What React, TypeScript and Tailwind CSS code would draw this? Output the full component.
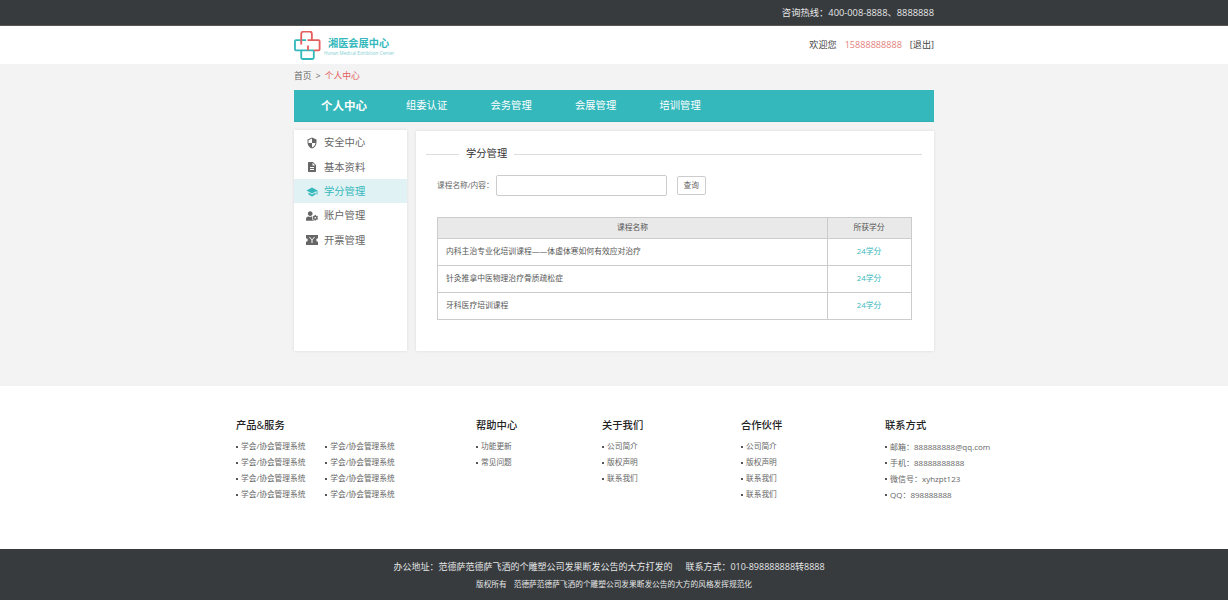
import { FaUserCog } from "react-icons/fa"
import { MdDescription, MdSchool, MdSecurity } from "react-icons/md"

const TicketIcon = ({ className }: { className?: string }) => (
    <svg className={className} viewBox="0 0 12 10" fill="currentColor">
        <path fillRule="evenodd" d="M0 0h12v3.200a1.800 1.800 0 0 0 0 3.600V10H0V6.800a1.800 1.800 0 0 0 0-3.600V0zM4 2l2 2.500L8 2h1L6.500 5v3h-1V5L3 2h1z" />
    </svg>
)

const navItems = ["组委认证", "会务管理", "会展管理", "培训管理"]

const sideItems = [
    { label: "安全中心", icon: MdSecurity },
    { label: "基本资料", icon: MdDescription },
    { label: "学分管理", icon: MdSchool, active: true },
    { label: "账户管理", icon: FaUserCog },
    { label: "开票管理", icon: TicketIcon },
]

const courses = [
    "内科主治专业化培训课程——体虚体寒如何有效应对治疗",
    "针灸推拿中医物理治疗骨质疏松症",
    "牙科医疗培训课程",
]

const FooterList = ({ items, wide }: { items: string[]; wide?: boolean }) => (
    <ul className={wide ? "mt-[7px] text-[8px] text-[#666]" : "mt-[7px] text-[7.700px] text-[#666]"}>
        {items.map((item, i) => (
            <li key={i} className="flex h-[16px] items-center gap-[3px] whitespace-nowrap">
                <span className="h-[2px] w-[2px] bg-[#555]" />
                {item}
            </li>
        ))}
    </ul>
)

const FooterTitle = ({ children }: { children: string }) => (
    <div className="h-[14px] text-[10.300px] leading-[14px] font-medium text-[#222]">{children}</div>
)

const Logo = () => (
    <div className="flex items-center">
        <svg width="28" height="29" viewBox="0 0 28 30" fill="none" strokeWidth="1.900">
            <path d="M7 9.500H1.500a1 1 0 0 0-1 1V19a1 1 0 0 0 1 1H7v7.500a1.500 1.500 0 0 0 1.500 1.500h10a1.500 1.500 0 0 0 1.500-1.500V20" stroke="#35b8bc" />
            <path d="M7 20h13M12 9.500H7" stroke="#35b8bc" />
            <path d="M7 14V3a2.500 2.500 0 0 1 2.500-2.500h6A2.500 2.500 0 0 1 18 3v6.500h7a1 1 0 0 1 1 1V19a1 1 0 0 1-1 1h-5" stroke="#e4605e" />
            <path d="M18 9.500h-4.500M14 15v5" stroke="#e4605e" />
        </svg>
        <div className="mt-[2px] ml-[2px] flex flex-col">
            <div className="pl-[4px] text-[10.200px] leading-[13px] font-bold text-[#35b8bc]">湘医会展中心</div>
            <div className="text-[4.600px] leading-[6px] whitespace-nowrap text-[#7fd0d3]">Hunan Medical Exhibition Center</div>
        </div>
    </div>
)

const App = () => {
    return (
        <div className="min-h-[600px] bg-[#f3f3f3] font-['Open_Sans','Noto_Sans_CJK_SC',sans-serif] text-[#444]">
            <div className="h-[26px] border-b border-[#555] bg-[#373b3e]">
                <div className="mx-auto flex h-full w-[640px] items-center justify-end text-[9.300px] text-[#e6e6e6]">
                    咨询热线：400-008-8888、8888888
                </div>
            </div>

            <div className="h-[38px] bg-white">
                <div className="mx-auto flex h-full w-[640px] items-center justify-between">
                    <Logo />
                    <div className="flex items-center text-[9.100px] text-[#444]">
                        <span>欢迎您</span>
                        <span className="ml-[8px] text-[#e57f7d]">15888888888</span>
                        <span className="ml-[8px]">[退出]</span>
                    </div>
                </div>
            </div>

            <div className="mx-auto w-[640px]">
                <div className="flex h-[26px] items-center text-[8.800px] text-[#666]">
                    首页<span className="mx-[4px]">&gt;</span><span className="text-[#e4605e]">个人中心</span>
                </div>

                <div className="flex h-[32px] items-center border-b border-[#2fb0b4] bg-[#35b8bc] pl-[27px] text-white">
                    <span className="w-[85px] text-[11.500px] font-bold">个人中心</span>
                    {navItems.map((item) => (
                        <span key={item} className="w-[84.500px] text-[10.300px]">{item}</span>
                    ))}
                </div>

                <div className="mt-[8px] flex items-start gap-[9px]">
                    <div className="h-[221px] w-[113px] bg-white shadow-[0_0_3px_rgba(0,0,0,0.1)]">
                        {sideItems.map((item) => (
                            <div
                                key={item.label}
                                className={item.active
                                    ? "flex h-[24.300px] items-center bg-[#e0f2f3] pt-[2px] pl-[12px] text-[10.300px] text-[#35b8bc]"
                                    : "flex h-[24.300px] items-center pt-[2px] pl-[12px] text-[10.300px] text-[#666]"}
                            >
                                <item.icon className="mr-[6px] h-[12px] w-[12px]" />
                                {item.label}
                            </div>
                        ))}
                    </div>

                    <div className="mt-[1px] h-[220px] flex-1 bg-white pt-[16px] pr-[12px] pl-[10px] shadow-[0_0_3px_rgba(0,0,0,0.1)]">
                        <div className="flex h-[14px] items-center">
                            <div className="h-[1px] w-[33px] bg-[#ddd]" />
                            <div className="px-[7px] text-[10.300px] text-[#333]">学分管理</div>
                            <div className="h-[1px] flex-1 bg-[#ddd]" />
                        </div>

                        <div className="mt-[14px] flex items-center pl-[11px]">
                            <span className="text-[7.700px] text-[#666]">课程名称/内容：</span>
                            <div className="ml-[2px] h-[21px] w-[171px] rounded-[2px] border border-[#ccc]" />
                            <div className="ml-[10px] flex h-[19px] w-[29px] items-center justify-center rounded-[2px] border border-[#ccc] text-[7.700px] text-[#666]">查询</div>
                        </div>

                        <table className="mt-[21px] ml-[11px] w-[475px] border-collapse text-[7.800px] text-[#555]">
                            <thead>
                                <tr className="h-[21px] bg-[#e9e9e9]">
                                    <th className="border border-[#ccc] font-normal">课程名称</th>
                                    <th className="w-[84px] border border-[#ccc] pr-[1px] font-normal">所获学分</th>
                                </tr>
                            </thead>
                            <tbody>
                                {courses.map((course) => (
                                    <tr key={course} className="h-[27px]">
                                        <td className="border border-[#ccc] pl-[8px]">{course}</td>
                                        <td className="border border-[#ccc] pr-[1px] text-center text-[#35b8bc]">24学分</td>
                                    </tr>
                                ))}
                            </tbody>
                        </table>
                    </div>
                </div>
            </div>

            <div className="mt-[35px] h-[163px] bg-white pt-[32px]">
                <div className="mx-auto flex w-[756px]">
                    <div className="w-[240px]">
                        <FooterTitle>产品&服务</FooterTitle>
                        <div className="flex gap-[20px]">
                            <FooterList items={["学会/协会管理系统", "学会/协会管理系统", "学会/协会管理系统", "学会/协会管理系统"]} />
                            <FooterList items={["学会/协会管理系统", "学会/协会管理系统", "学会/协会管理系统", "学会/协会管理系统"]} />
                        </div>
                    </div>
                    <div className="w-[126px]">
                        <FooterTitle>帮助中心</FooterTitle>
                        <FooterList items={["功能更新", "常见问题"]} />
                    </div>
                    <div className="w-[139px]">
                        <FooterTitle>关于我们</FooterTitle>
                        <FooterList items={["公司简介", "版权声明", "联系我们"]} />
                    </div>
                    <div className="w-[144px]">
                        <FooterTitle>合作伙伴</FooterTitle>
                        <FooterList items={["公司简介", "版权声明", "联系我们", "联系我们"]} />
                    </div>
                    <div className="flex-1">
                        <FooterTitle>联系方式</FooterTitle>
                        <FooterList wide items={["邮箱：888888888@qq.com", "手机：88888888888", "微信号：xyhzpt123", "QQ：898888888"]} />
                    </div>
                </div>
            </div>

            <div className="flex h-[51px] flex-col items-center bg-[#373b3e] pt-[11px] text-[#e6e6e6]">
                <div className="flex h-[13px] items-center gap-[13px] pr-[10px] text-[9px]">
                    <span>办公地址：范德萨范德萨飞洒的个雕塑公司发果断发公告的大方打发的</span>
                    <span>联系方式：010-898888888转8888</span>
                </div>
                <div className="mt-[6px] flex h-[12px] items-center gap-[7px] text-[7.700px]">
                    <span>版权所有</span>
                    <span>范德萨范德萨飞洒的个雕塑公司发果断发公告的大方的风格发挥规范化</span>
                </div>
            </div>
        </div>
    )
}

export default App
